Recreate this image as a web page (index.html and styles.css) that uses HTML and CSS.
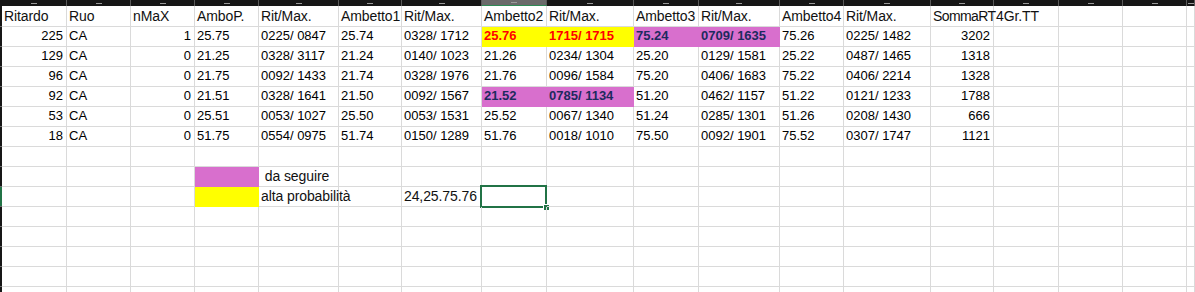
FILE: index.html
```html
<!DOCTYPE html>
<html lang="it">
<head>
<meta charset="utf-8">
<title>Foglio</title>
<link rel="stylesheet" href="styles.css">
</head>
<body>
<div class="colheads">
  <div class="corner"></div>
  <div class="ch"></div><div class="ch"></div><div class="ch"></div><div class="ch"></div><div class="ch"></div><div class="ch"></div><div class="ch"></div><div class="ch sel"></div><div class="ch"></div><div class="ch"></div><div class="ch"></div><div class="ch"></div><div class="ch"></div><div class="ch"></div><div class="ch"></div><div class="ch"></div><div class="ch"></div><div class="ch"></div>
</div>
<div class="sheet">
  <div class="rowheads">
    <div class="rh first"></div><div class="rh"></div><div class="rh"></div><div class="rh"></div><div class="rh"></div><div class="rh"></div><div class="rh"></div><div class="rh"></div><div class="rh"></div><div class="rh sel"></div><div class="rh"></div><div class="rh"></div><div class="rh"></div><div class="rh"></div><div class="rh"></div>
  </div>
  <div class="grid">
    <!-- row 1 -->
    <div class="c h">Ritardo</div><div class="c h">Ruo</div><div class="c h">nMaX</div><div class="c h">AmboP.</div><div class="c h">Rit/Max.</div><div class="c h">Ambetto1</div><div class="c h">Rit/Max.</div><div class="c h">Ambetto2</div><div class="c h">Rit/Max.</div><div class="c h">Ambetto3</div><div class="c h">Rit/Max.</div><div class="c h">Ambetto4</div><div class="c h">Rit/Max.</div><div class="c h tight">SommaRT</div><div class="c h">4Gr.TT</div><div class="c"></div><div class="c"></div><div class="c"></div>
    <!-- row 2 -->
    <div class="c r">225</div><div class="c">CA</div><div class="c r">1</div><div class="c">25.75</div><div class="c">0225/ 0847</div><div class="c">25.74</div><div class="c">0328/ 1712</div><div class="c yel">25.76</div><div class="c yel">1715/ 1715</div><div class="c vio">75.24</div><div class="c vio">0709/ 1635</div><div class="c">75.26</div><div class="c">0225/ 1482</div><div class="c r">3202</div><div class="c"></div><div class="c"></div><div class="c"></div><div class="c"></div>
    <!-- row 3 -->
    <div class="c r">129</div><div class="c">CA</div><div class="c r">0</div><div class="c">21.25</div><div class="c">0328/ 3117</div><div class="c">21.24</div><div class="c">0140/ 1023</div><div class="c">21.26</div><div class="c">0234/ 1304</div><div class="c">25.20</div><div class="c">0129/ 1581</div><div class="c">25.22</div><div class="c">0487/ 1465</div><div class="c r">1318</div><div class="c"></div><div class="c"></div><div class="c"></div><div class="c"></div>
    <!-- row 4 -->
    <div class="c r">96</div><div class="c">CA</div><div class="c r">0</div><div class="c">21.75</div><div class="c">0092/ 1433</div><div class="c">21.74</div><div class="c">0328/ 1976</div><div class="c">21.76</div><div class="c">0096/ 1584</div><div class="c">75.20</div><div class="c">0406/ 1683</div><div class="c">75.22</div><div class="c">0406/ 2214</div><div class="c r">1328</div><div class="c"></div><div class="c"></div><div class="c"></div><div class="c"></div>
    <!-- row 5 -->
    <div class="c r">92</div><div class="c">CA</div><div class="c r">0</div><div class="c">21.51</div><div class="c">0328/ 1641</div><div class="c">21.50</div><div class="c">0092/ 1567</div><div class="c vio">21.52</div><div class="c vio">0785/ 1134</div><div class="c">51.20</div><div class="c">0462/ 1157</div><div class="c">51.22</div><div class="c">0121/ 1233</div><div class="c r">1788</div><div class="c"></div><div class="c"></div><div class="c"></div><div class="c"></div>
    <!-- row 6 -->
    <div class="c r">53</div><div class="c">CA</div><div class="c r">0</div><div class="c">25.51</div><div class="c">0053/ 1027</div><div class="c">25.50</div><div class="c">0053/ 1531</div><div class="c">25.52</div><div class="c">0067/ 1340</div><div class="c">51.24</div><div class="c">0285/ 1301</div><div class="c">51.26</div><div class="c">0208/ 1430</div><div class="c r">666</div><div class="c"></div><div class="c"></div><div class="c"></div><div class="c"></div>
    <!-- row 7 -->
    <div class="c r">18</div><div class="c">CA</div><div class="c r">0</div><div class="c">51.75</div><div class="c">0554/ 0975</div><div class="c">51.74</div><div class="c">0150/ 1289</div><div class="c">51.76</div><div class="c">0018/ 1010</div><div class="c">75.50</div><div class="c">0092/ 1901</div><div class="c">75.52</div><div class="c">0307/ 1747</div><div class="c r">1121</div><div class="c"></div><div class="c"></div><div class="c"></div><div class="c"></div>
    <!-- row 8 -->
    <div class="c"></div><div class="c"></div><div class="c"></div><div class="c"></div><div class="c"></div><div class="c"></div><div class="c"></div><div class="c"></div><div class="c"></div><div class="c"></div><div class="c"></div><div class="c"></div><div class="c"></div><div class="c"></div><div class="c"></div><div class="c"></div><div class="c"></div><div class="c"></div>
    <!-- row 9 -->
    <div class="c"></div><div class="c"></div><div class="c"></div><div class="c vio"></div><div class="c h"> da seguire</div><div class="c"></div><div class="c"></div><div class="c"></div><div class="c"></div><div class="c"></div><div class="c"></div><div class="c"></div><div class="c"></div><div class="c"></div><div class="c"></div><div class="c"></div><div class="c"></div><div class="c"></div>
    <!-- row 10 -->
    <div class="c"></div><div class="c"></div><div class="c"></div><div class="c yel"></div><div class="c h">alta probabilità</div><div class="c"></div><div class="c h">24,25.75.76</div><div class="c"><span class="cursor"></span></div><div class="c"></div><div class="c"></div><div class="c"></div><div class="c"></div><div class="c"></div><div class="c"></div><div class="c"></div><div class="c"></div><div class="c"></div><div class="c"></div>
    <!-- rows 11-15 -->
    <div class="c"></div><div class="c"></div><div class="c"></div><div class="c"></div><div class="c"></div><div class="c"></div><div class="c"></div><div class="c"></div><div class="c"></div><div class="c"></div><div class="c"></div><div class="c"></div><div class="c"></div><div class="c"></div><div class="c"></div><div class="c"></div><div class="c"></div><div class="c"></div>
    <div class="c"></div><div class="c"></div><div class="c"></div><div class="c"></div><div class="c"></div><div class="c"></div><div class="c"></div><div class="c"></div><div class="c"></div><div class="c"></div><div class="c"></div><div class="c"></div><div class="c"></div><div class="c"></div><div class="c"></div><div class="c"></div><div class="c"></div><div class="c"></div>
    <div class="c"></div><div class="c"></div><div class="c"></div><div class="c"></div><div class="c"></div><div class="c"></div><div class="c"></div><div class="c"></div><div class="c"></div><div class="c"></div><div class="c"></div><div class="c"></div><div class="c"></div><div class="c"></div><div class="c"></div><div class="c"></div><div class="c"></div><div class="c"></div>
    <div class="c"></div><div class="c"></div><div class="c"></div><div class="c"></div><div class="c"></div><div class="c"></div><div class="c"></div><div class="c"></div><div class="c"></div><div class="c"></div><div class="c"></div><div class="c"></div><div class="c"></div><div class="c"></div><div class="c"></div><div class="c"></div><div class="c"></div><div class="c"></div>
    <div class="c"></div><div class="c"></div><div class="c"></div><div class="c"></div><div class="c"></div><div class="c"></div><div class="c"></div><div class="c"></div><div class="c"></div><div class="c"></div><div class="c"></div><div class="c"></div><div class="c"></div><div class="c"></div><div class="c"></div><div class="c"></div><div class="c"></div><div class="c"></div>
  </div>
</div>
</body>
</html>
```
FILE: styles.css
```css
html, body {
  margin: 0;
  padding: 0;
  background: #ffffff;
  width: 1195px;
  height: 292px;
  overflow: hidden;
}

body {
  font-family: "Liberation Sans", Arial, sans-serif;
  font-size: 13px;
  color: #000;
}

.colheads {
  display: grid;
  grid-template-columns: 2px 65px 64px 64px 64px 80px 63px 80px 65px 87px 65px 81px 64px 87px 63px 65px 64px 64px 1fr;
  height: 6px;
  background: #161616;
  overflow: hidden;
}

.ch {
  position: relative;
  border-right: 1px solid #5a5a5a;
}

.ch::after {
  content: "";
  position: absolute;
  left: calc(50% - 3px);
  bottom: 2px;
  width: 6px;
  height: 1px;
  background: #9a9a9a;
}

.ch.sel {
  background: #6a6a6a;
  border-bottom: 1px solid #2f8a55;
}

.sheet {
  display: flex;
  height: 286px;
  overflow: hidden;
}

.rowheads {
  width: 2px;
  flex: none;
  background: #161616;
  display: flex;
  flex-direction: column;
}

.rh {
  height: 19px;
  flex: none;
  border-bottom: 1px solid #6a6a6a;
}

.rh.first {
  height: 20px;
}

.rh.sel {
  background: #217346;
}

.grid {
  flex: 1;
  display: grid;
  grid-template-columns: 65px 64px 64px 64px 80px 63px 80px 65px 87px 65px 81px 64px 87px 63px 65px 64px 64px 1fr;
  grid-template-rows: 21px;
  grid-auto-rows: 20px;
}

.c {
  box-sizing: border-box;
  border-right: 1px solid #dadada;
  border-bottom: 1px solid #dadada;
  display: flex;
  align-items: flex-end;
  padding: 0 2px 3px 2px;
  line-height: 14px;
  white-space: pre;
  position: relative;
}

.c.r {
  justify-content: flex-end;
  padding-right: 3px;
}

.c.h {
  font-size: 14px;
  letter-spacing: -0.1px;
  color: #111;
}

.c.h.tight {
  letter-spacing: -0.6px;
}

.yel {
  background: #ffff00;
  border-color: #ffff00;
  color: #ff0000;
  font-weight: bold;
}

.vio {
  background: #d86fcd;
  border-color: #d86fcd;
  color: #1d2a5e;
  font-weight: bold;
}

.cursor {
  position: absolute;
  left: -2px;
  top: -2px;
  right: -1px;
  bottom: -2px;
  border: 2px solid #217346;
}

.cursor::after {
  content: "";
  position: absolute;
  right: -4px;
  bottom: -4px;
  width: 5px;
  height: 5px;
  background: #217346;
  border-left: 1px solid #fff;
  border-top: 1px solid #fff;
}
```
